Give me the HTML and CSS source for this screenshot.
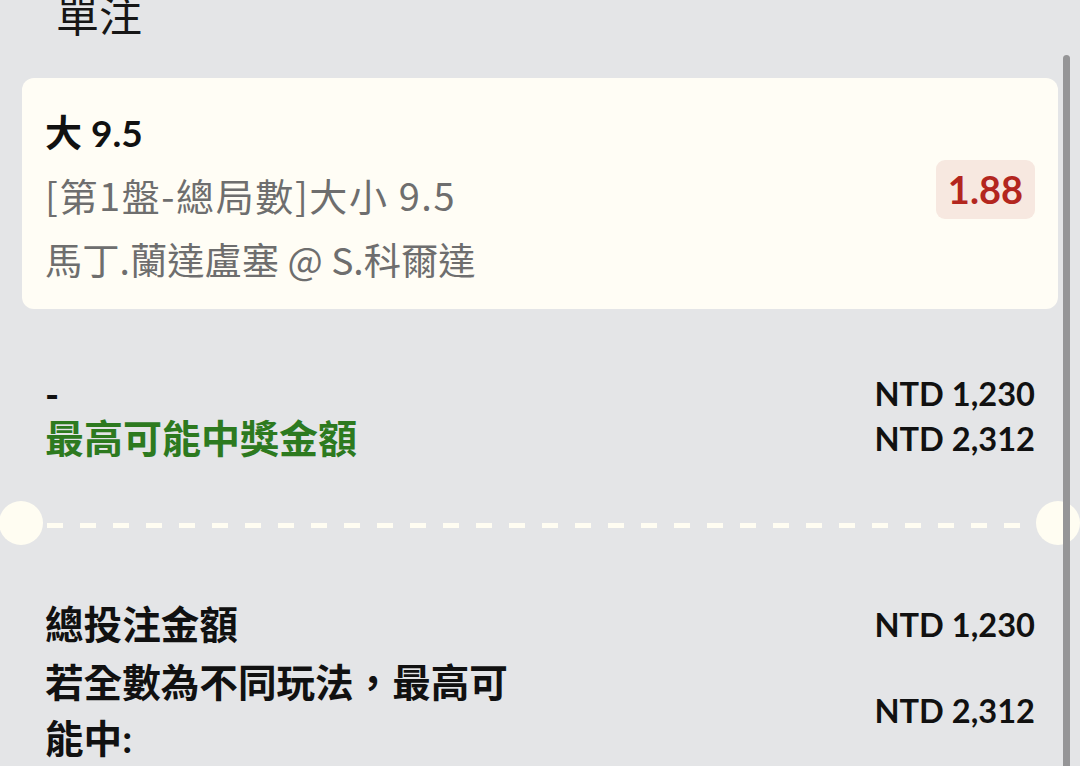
FILE: index.html
```html
<!DOCTYPE html>
<html lang="zh-Hant">
<head>
<meta charset="utf-8">
<title>單注</title>
<link rel="stylesheet" href="styles.css">
</head>
<body>
<div class="page">
  <h1 class="title">單注</h1>

  <div class="card">
    <div class="card-info">
      <div class="pick">大 9.5</div>
      <div class="market">[第1盤-總局數]大小 9.5</div>
      <div class="match">馬丁.蘭達盧塞 @ S.科爾達</div>
    </div>
    <div class="odds">1.88</div>
  </div>

  <div class="summary">
    <div class="row">
      <span class="dash-label">-</span>
      <span class="amount">NTD 1,230</span>
    </div>
    <div class="row">
      <span class="win-label">最高可能中獎金額</span>
      <span class="amount">NTD 2,312</span>
    </div>
  </div>

  <div class="divider">
    <span class="notch notch-left"></span>
    <span class="dashes"></span>
    <span class="notch notch-right"></span>
  </div>

  <div class="totals">
    <div class="total-row">
      <span class="total-label">總投注金額</span>
      <span class="amount">NTD 1,230</span>
    </div>
    <div class="total-row">
      <span class="total-label">若全數為不同玩法，最高可能中:</span>
      <span class="amount">NTD 2,312</span>
    </div>
  </div>
</div>
<div class="scrollbar"></div>
</body>
</html>
```

FILE: styles.css
```css
html, body {
  margin: 0;
  padding: 0;
  height: 100%;
  overflow: hidden;
}

body {
  background: #e4e5e7;
  font-family: Lato, "Noto Sans CJK TC", sans-serif;
  color: #111111;
}

.page {
  display: flex;
  flex-direction: column;
}

.title {
  margin: -8px 0 0 0;
  padding-left: 56px;
  font-family: "Noto Sans CJK TC", sans-serif;
  font-size: 43px;
  font-weight: 400;
  line-height: 42px;
  height: 42px;
  color: #161616;
}

.card {
  margin: 44px 22px 0 22px;
  height: 231px;
  box-sizing: border-box;
  padding: 25px 23px 18px 23px;
  background: #fffdf5;
  border-radius: 12px;
  display: flex;
  align-items: center;
  justify-content: space-between;
}

.card-info {
  display: flex;
  flex-direction: column;
  align-self: stretch;
}

.pick {
  font-family: Lato, "Noto Sans CJK TC", sans-serif;
  font-weight: 700;
  font-size: 37px;
  line-height: 60px;
  color: #111111;
}

.market,
.match {
  font-family: "Noto Sans CJK TC", sans-serif;
  font-size: 38px;
  font-weight: 400;
  line-height: 64px;
  color: #6e6e6e;
}

.market {
  letter-spacing: 1.6px;
}

.match {
  font-size: 37.3px;
}

.odds {
  margin-top: -16px;
  background: #f7e8e0;
  color: #b3261e;
  font-weight: 700;
  font-size: 38px;
  line-height: 59px;
  padding: 0 12px;
  border-radius: 9px;
}

.summary {
  margin-top: 62px;
  padding: 0 45px;
  display: flex;
  flex-direction: column;
}

.row {
  display: flex;
  justify-content: space-between;
  align-items: center;
  height: 45px;
}

.dash-label {
  font-weight: 700;
  font-size: 38px;
  line-height: 45px;
  margin-top: 2px;
}

.win-label {
  font-family: Lato, "Noto Sans CJK TC", sans-serif;
  font-weight: 700;
  font-size: 39px;
  line-height: 45px;
  color: #2d7a1f;
}

.amount {
  font-family: Lato, sans-serif;
  font-weight: 700;
  font-size: 32.6px;
  line-height: 45px;
  color: #111111;
  white-space: nowrap;
}

.divider {
  position: relative;
  margin-top: 40px;
  height: 44px;
  display: flex;
  align-items: center;
  padding: 0 45px 0 47px;
}

.dashes {
  flex: 1;
  height: 5px;
  margin-top: 4px;
  background: repeating-linear-gradient(to right, #fffdf2 0 16px, transparent 16px 33px);
}

.notch {
  position: absolute;
  top: 0;
  width: 44px;
  height: 44px;
  border-radius: 50%;
  background: #fffdf2;
}

.notch-left {
  left: -1px;
}

.notch-right {
  right: 0;
}

.totals {
  margin-top: 51px;
  padding: 0 45px;
  display: flex;
  flex-direction: column;
  gap: 2px;
}

.total-row {
  display: flex;
  justify-content: space-between;
  align-items: center;
}

.total-label {
  max-width: 495px;
  font-family: Lato, "Noto Sans CJK TC", sans-serif;
  font-weight: 700;
  font-size: 38.6px;
  line-height: 56px;
  color: #111111;
}

.scrollbar {
  position: fixed;
  top: 55px;
  bottom: 0;
  left: 1063px;
  width: 7px;
  border-radius: 4px 4px 0 0;
  background: #959597;
}
```
